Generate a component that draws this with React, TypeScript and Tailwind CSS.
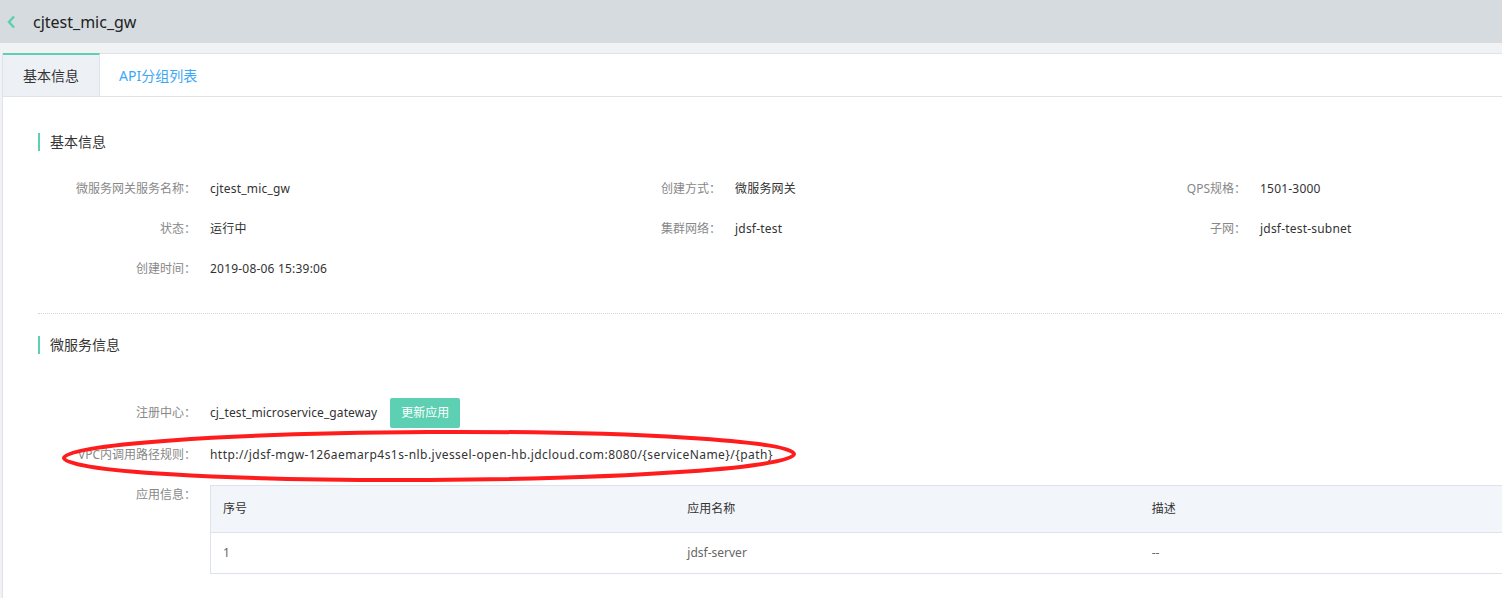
import { ReactNode } from "react";

const font = "font-['Noto_Sans','Noto_Sans_CJK_SC',sans-serif]";

function SectionTitle({ children }: { children: ReactNode }) {
  return (
    <div className="flex items-center h-[18px]">
      <span className="w-[2px] h-[18px] bg-[#5dcfb3]" />
      <span className="ml-[10px] text-[14px] leading-[18px] text-[#333]">{children}</span>
    </div>
  );
}

function Field({ label, value }: { label: string; value: ReactNode }) {
  return (
    <div className="flex items-center h-[40px] w-[525px] shrink-0">
      <div className="w-[158px] shrink-0 text-right text-[12px] text-[#888]">{label}</div>
      <div className="ml-[14px] text-[12px] text-[#333] tracking-[0.2px]">{value}</div>
    </div>
  );
}

const rows = [
  [
    { label: "微服务网关服务名称：", value: "cjtest_mic_gw" },
    { label: "创建方式：", value: "微服务网关" },
    { label: "QPS规格：", value: "1501-3000" },
  ],
  [
    { label: "状态：", value: "运行中" },
    { label: "集群网络：", value: "jdsf-test" },
    { label: "子网：", value: "jdsf-test-subnet" },
  ],
  [{ label: "创建时间：", value: "2019-08-06 15:39:06" }],
];

export default function App() {
  return (
    <div className={`relative w-[1502px] h-[598px] overflow-hidden bg-[#f1f2f4] ${font}`}>
      <header className="h-[43px] bg-[#d5dbdf] flex items-center">
        <svg width="10" height="14" viewBox="0 0 10 14" className="ml-[6px]">
          <path d="M8 1.5 L3 7 L8 12.5" fill="none" stroke="#5dcfb3" strokeWidth="2.5" />
        </svg>
        <h1 className="ml-[17px] text-[16px] text-[#222] leading-none">cjtest_mic_gw</h1>
      </header>

      <div className="mt-[10px] ml-[2px] bg-white border-l border-t border-[#dde3e8] h-[545px]">
        <div className="flex h-[43px] border-b border-[#dde3e8]">
          <div className="w-[97px] h-[43px] bg-[#edf1f5] border-t-2 border-[#5dcfb3] border-r border-r-[#dde3e8] flex items-center justify-center text-[14px] text-[#333] -mt-px">
            基本信息
          </div>
          <div className="pl-[19px] pr-[20px] flex items-center text-[14px] text-[#3ca8f5]">API分组列表</div>
        </div>

        <div className="pl-[35px] pt-[36px]">
          <SectionTitle>基本信息</SectionTitle>
          <div className="mt-[18px] flex flex-col">
            {rows.map((r, i) => (
              <div key={i} className="flex">
                {r.map((f) => (
                  <Field key={f.label} label={f.label} value={f.value} />
                ))}
              </div>
            ))}
          </div>

          <div className="mt-[24px] border-t border-dotted border-[#d6d6d6] w-[1600px]" />

          <div className="mt-[22px]">
            <SectionTitle>微服务信息</SectionTitle>
          </div>

          <div className="mt-[44px] flex items-center h-[30px]">
            <div className="w-[158px] shrink-0 text-right text-[12px] text-[#888]">注册中心：</div>
            <div className="ml-[14px] text-[12px] text-[#333] tracking-[0.1px]">cj_test_microservice_gateway</div>
            <button className="ml-[13px] h-[30px] px-[11px] rounded-[2px] bg-[#5dcfb3] text-white text-[12px]">
              更新应用
            </button>
          </div>

          <div className="mt-[12px] flex items-center h-[30px]">
            <div className="w-[158px] shrink-0 text-right text-[12px] text-[#888]">VPC内调用路径规则：</div>
            <div className="ml-[14px] text-[12px] text-[#333] tracking-[0.45px]">
              http://jdsf-mgw-126aemarp4s1s-nlb.jvessel-open-hb.jdcloud.com:8080/{"{serviceName}"}/{"{path}"}
            </div>
          </div>

          <div className="mt-[15px] flex items-start">
            <div className="w-[158px] shrink-0 text-right text-[12px] text-[#888] pt-[1px]">应用信息：</div>
            <div className="ml-[14px] w-[1395px] shrink-0 border border-[#dde3ea]">
              <div className="grid grid-cols-3 h-[47px] bg-[#f2f5f9] border-b border-[#dde3ea] text-[12px] text-[#333]">
                <div className="px-[12px] flex items-center">序号</div>
                <div className="px-[12px] flex items-center">应用名称</div>
                <div className="px-[12px] flex items-center">描述</div>
              </div>
              <div className="grid grid-cols-3 h-[40px] text-[12px] text-[#666]">
                <div className="px-[12px] flex items-center">1</div>
                <div className="px-[12px] flex items-center">jdsf-server</div>
                <div className="px-[12px] flex items-center">--</div>
              </div>
            </div>
          </div>
        </div>
      </div>

      <svg className="absolute left-0 top-0 pointer-events-none" width="1502" height="598">
        <ellipse cx="429" cy="456" rx="365" ry="24" fill="none" stroke="#ff1c1c" strokeWidth="4" transform="rotate(-0.3 429 456)" />
      </svg>
    </div>
  );
}
